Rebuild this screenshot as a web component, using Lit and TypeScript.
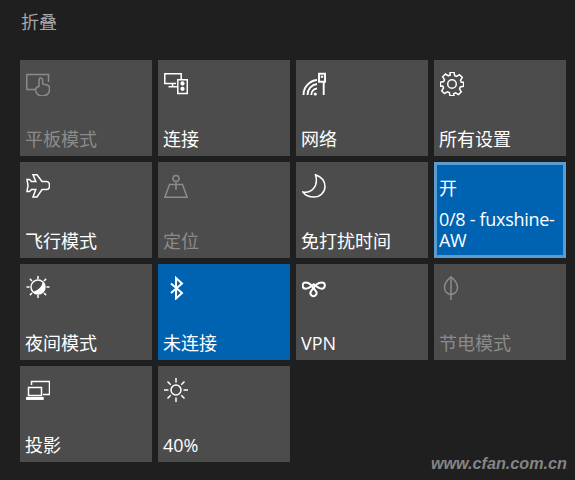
import {css, html, LitElement, svg} from "lit"
import {customElement} from "lit/decorators.js"
import {classMap} from "lit/directives/class-map.js"

const icons = {
    tablet: svg`<path d="M9 17.5H.8V2.5h21.7V10"/><path d="M13 15V7.8a1.8 1.8 0 0 1 3.6 0V12l4.5 1a3 3 0 0 1 2.4 3v1.5a7 6.5 0 0 1-14 .2c0-1.5 1-2.5 3.5-3.5"/>`,
    connect: svg`<path d="M12 11.5H.8V1.8h16.4V7"/><path d="M8.5 11.5v3M4.5 14.8H13"/><path d="M13.8 7.8h9.5v13.6h-9.5z"/><circle cx="18.5" cy="11.5" r="1.4" fill="currentColor"/><circle cx="18.5" cy="16.8" r="1.4" fill="currentColor"/>`,
    network: svg`<path stroke-width="1.9" d="M1.5 23A15 15 0 0 1 15 8M5.5 23a11 11 0 0 1 9.500-11M9.300 23a6.500 6.500 0 0 1 5.700-6.500"/><circle cx="13.3" cy="22" r="1.6" fill="currentColor" stroke="none"/><path stroke-width="1.9" d="M21.7 23V9.800M17 1.800h6v8h-6zM18.800 4.800h2.400"/>`,
    gear: svg`<path d="M10 1h4l.7 3.300 1.900.8 2.900-1.800 2.800 2.800-1.800 2.900.8 1.900L23.600 11v4l-3.300.7-.8 1.900 1.800 2.900-2.800 2.800-2.900-1.800-1.900.8L14 24.500h-4l-.7-3.200-1.900-.8-2.900 1.800-2.800-2.800 1.800-2.900-.8-1.900L.4 15v-4l3.300-.7.8-1.900-1.800-2.900 2.800-2.800 2.900 1.800 1.900-.8z" transform="translate(0 -.7)"/><circle cx="12" cy="12" r="4.300"/>`,
    plane: svg`<path d="M7 .8h4l5 6.700h4.500c2 0 3 2 3 4s-1 4-3 4H16L11 23H7l2.800-7.500H5.500l-2 2H1l1-6-1-6h2.500l2 2h4.300z"/>`,
    location: svg`<circle cx="12" cy="4.500" r="3"/><path d="M12 7.500v8.500M5.500 10.500h13l4.600 12.700H.9z"/>`,
    moon: svg`<path d="M13.500.7C20 3 23 8 23 12.500 23 18.500 18 23 12 23 7 23 3 21 .8 18 9 19.500 17 13 13.500.7z"/>`,
    night: svg`<circle cx="12" cy="11" r="7"/><path d="M16.900 6.100a7 7 0 0 1-9.900 9.900 14 14 0 0 0 9.900-9.900z" fill="currentColor" stroke="none"/><path d="M12 0v3M12 19v3M.5 11h3M20.500 11h3M3.900 2.900l2.100 2.100M18 17l2.100 2.100M3.900 19.100 6 17M18 5l2.100-2.100"/>`,
    bluetooth: svg`<path stroke-width="2" d="M7 7.500 18 17l-6 5.500V2l6 5.500L7 17"/>`,
    vpn: svg`<path stroke-width="2" d="M3.700 6.500C7.500 6.500 9.500 9 13.700 15a3 3 0 1 1-4.400 0C13.500 9 15.500 6.500 19.800 6.500a3 3 0 0 1 0 6.200c-3 0-5-1.700-8-4.400-3 2.700-5.500 4.400-8.100 4.400a3 3 0 0 1 0-6.200z"/>`,
    saver: svg`<path d="M11 24V1"/><path d="M11 .8C7 4 4.500 8 4.500 11.500s2.500 6.500 6.500 7c4-.5 6.500-3.500 6.500-7S15 4 11 .8z"/>`,
    project: svg`<path d="M5.500 7V3.500h18v13H17"/><path d="M2.500 9.500h13v8h-13z"/><path d="M.8 19.700H17v1.500H.8z"/>`,
    brightness: svg`<circle cx="12" cy="12" r="5"/><path d="M12 0v4.500M12 19.500V24M0 12h4.500M19.500 12H24M3.500 3.500l3.200 3.200M17.300 17.300l3.200 3.200M3.500 20.500l3.200-3.200M17.300 6.700l3.200-3.200"/>`,
}

type IconName = keyof typeof icons

interface Tile {
    label: string
    icon?: IconName
    top?: string
    disabled?: boolean
    active?: boolean
    selected?: boolean
}

const tiles: Tile[] = [
    {label: "平板模式", icon: "tablet", disabled: true},
    {label: "连接", icon: "connect"},
    {label: "网络", icon: "network"},
    {label: "所有设置", icon: "gear"},
    {label: "飞行模式", icon: "plane"},
    {label: "定位", icon: "location", disabled: true},
    {label: "免打扰时间", icon: "moon"},
    {label: "0/8 - fuxshine-AW", top: "开", active: true, selected: true},
    {label: "夜间模式", icon: "night"},
    {label: "未连接", icon: "bluetooth", active: true},
    {label: "VPN", icon: "vpn"},
    {label: "节电模式", icon: "saver", disabled: true},
    {label: "投影", icon: "project"},
    {label: "40%", icon: "brightness"},
]

@customElement("app-root")
export class AppRoot extends LitElement {
    static styles = css`
      :host {
        display: block;
        width: 575px;
        height: 480px;
        position: relative;
        overflow: hidden;
        background: #1f1f1f;
        color: #fff;
        font-family: "Open Sans", "Noto Sans CJK SC", sans-serif;
        font-size: 18px;
      }

      .collapse {
        height: 60px;
        padding: 9px 0 0 21px;
        box-sizing: border-box;
        color: #a6a6a6;
        line-height: 26px;
      }

      .grid {
        display: grid;
        grid-template-columns: repeat(4, 132px);
        grid-auto-rows: 96px;
        gap: 6px;
        padding-left: 20px;
      }

      .tile {
        display: flex;
        flex-direction: column;
        justify-content: space-between;
        box-sizing: border-box;
        padding: 12px 6px 4px;
        background: #4c4c4c;
      }

      .tile.disabled {
        color: #8b8b8b;
      }

      .tile.active {
        background: #0063b1;
      }

      .tile.selected {
        border: 3px solid #5a9bd0;
        padding: 9px 3px 1px;
      }

      .icon {
        display: block;
        width: 24px;
        height: 24px;
        fill: none;
        stroke: currentColor;
        stroke-width: 1.5;
      }

      .label {
        margin-left: -1px;
        line-height: 26px;
      }

      .selected .label {
        line-height: 21px;
        margin-bottom: 3px;
        letter-spacing: -0.3px;
      }

      .top {
        margin-left: -1px;
        line-height: 26px;
        padding-top: 1px;
      }

      .mark {
        position: absolute;
        right: 8px;
        bottom: 7px;
        color: #858585;
        font: italic bold 16.2px "Liberation Sans", sans-serif;
      }
    `

    renderTile(tile: Tile) {
        const classes = {
            tile: true,
            disabled: !!tile.disabled,
            active: !!tile.active,
            selected: !!tile.selected,
        }
        return html`
            <div class=${classMap(classes)}>
                ${tile.icon
                    ? html`<svg class="icon" viewBox="0 0 24 24">${icons[tile.icon]}</svg>`
                    : html`<div class="top">${tile.top}</div>`}
                <div class="label">${tile.label}</div>
            </div>
        `
    }

    render() {
        return html`
            <div class="collapse">折叠</div>
            <div class="grid">${tiles.map((t) => this.renderTile(t))}</div>
            <div class="mark">www.cfan.com.cn</div>
        `
    }
}
